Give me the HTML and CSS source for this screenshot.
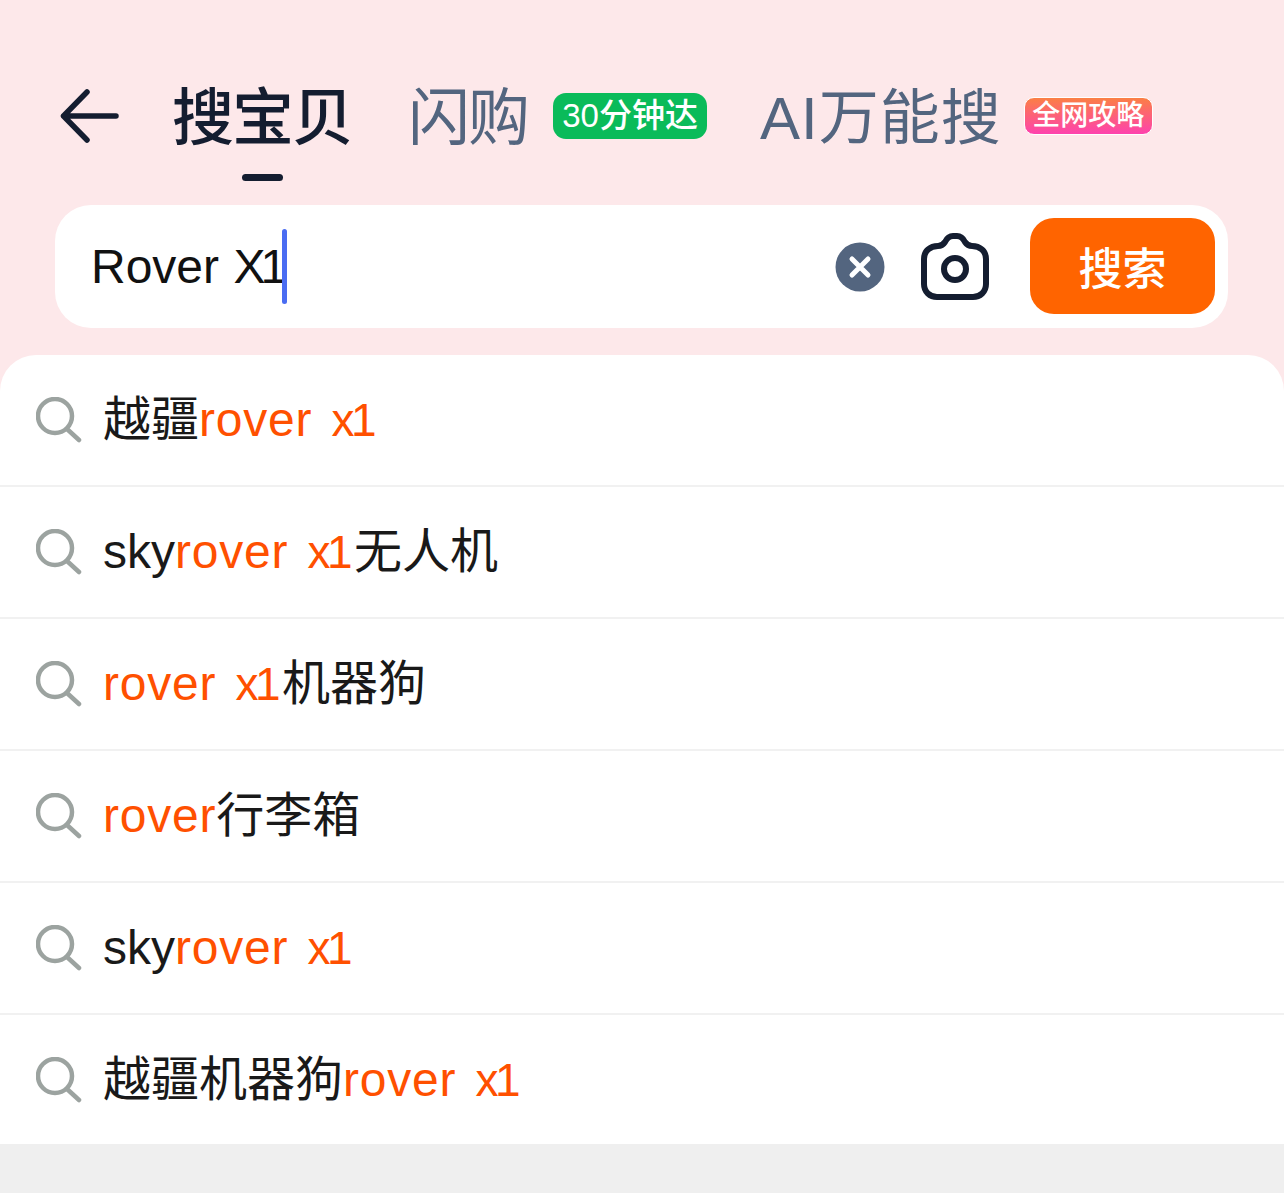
FILE: index.html
```html
<!DOCTYPE html>
<html lang="zh-CN">
<head>
    <meta charset="UTF-8">
    <title>搜索</title>
    <link rel="stylesheet" href="styles.css">
</head>
<body>
    <header class="tabs">
        <svg class="back-icon" width="60" height="56" viewBox="0 0 60 56">
            <path d="M56 28H3.500M27 4 3.500 28 27 52" fill="none" stroke="#141d30" stroke-width="5.5" stroke-linecap="round" stroke-linejoin="round"/>
        </svg>
        <div class="tab tab-active">搜宝贝</div>
        <div class="tab tab-flash">闪购</div>
        <span class="badge badge-green">30分钟达</span>
        <div class="tab tab-ai">AI万能搜</div>
        <span class="badge badge-pink">全网攻略</span>
    </header>

    <section class="search-box">
        <div class="search-text">Rover <span class="search-x">X1</span><span class="caret"></span></div>
        <svg class="clear-icon" width="50" height="50" viewBox="0 0 50 50">
            <circle cx="25" cy="25" r="24.5" fill="#53657f"/>
            <path d="M17 17l16 16M33 17 17 33" stroke="#fff" stroke-width="5" stroke-linecap="round"/>
        </svg>
        <svg class="camera-icon" width="68" height="68" viewBox="0 0 68 68">
            <path d="M17 13c3 0 5-1 7-4 2-4 5-6 8-6h4c3 0 6 2 8 6 2 3 4 4 7 4 8 0 14 5 14 13v25c0 8-6 13-13 13H16C9 64 3 59 3 51V26c0-8 6-13 14-13z" fill="none" stroke="#141d30" stroke-width="6" stroke-linejoin="round"/>
            <circle cx="34" cy="36" r="11" fill="none" stroke="#141d30" stroke-width="6"/>
        </svg>
        <button class="search-btn">搜索</button>
    </section>

    <ul class="suggest-list">
        <li class="suggest-item">
            <svg class="search-icon" width="46" height="46" viewBox="0 0 46 46"><circle cx="19" cy="19" r="17" fill="none" stroke="#9ca3a0" stroke-width="4.5"/><path d="M31 32l12 11" stroke="#9ca3a0" stroke-width="4.5" stroke-linecap="round"/></svg>
            <span class="suggest-text">越疆<em>rover <span class="x1">x1</span></em></span>
        </li>
        <li class="suggest-item">
            <svg class="search-icon" width="46" height="46" viewBox="0 0 46 46"><circle cx="19" cy="19" r="17" fill="none" stroke="#9ca3a0" stroke-width="4.5"/><path d="M31 32l12 11" stroke="#9ca3a0" stroke-width="4.5" stroke-linecap="round"/></svg>
            <span class="suggest-text">sky<em>rover <span class="x1">x1</span></em>无人机</span>
        </li>
        <li class="suggest-item">
            <svg class="search-icon" width="46" height="46" viewBox="0 0 46 46"><circle cx="19" cy="19" r="17" fill="none" stroke="#9ca3a0" stroke-width="4.5"/><path d="M31 32l12 11" stroke="#9ca3a0" stroke-width="4.5" stroke-linecap="round"/></svg>
            <span class="suggest-text"><em>rover <span class="x1">x1</span></em>机器狗</span>
        </li>
        <li class="suggest-item">
            <svg class="search-icon" width="46" height="46" viewBox="0 0 46 46"><circle cx="19" cy="19" r="17" fill="none" stroke="#9ca3a0" stroke-width="4.5"/><path d="M31 32l12 11" stroke="#9ca3a0" stroke-width="4.5" stroke-linecap="round"/></svg>
            <span class="suggest-text"><em>rover</em>行李箱</span>
        </li>
        <li class="suggest-item">
            <svg class="search-icon" width="46" height="46" viewBox="0 0 46 46"><circle cx="19" cy="19" r="17" fill="none" stroke="#9ca3a0" stroke-width="4.5"/><path d="M31 32l12 11" stroke="#9ca3a0" stroke-width="4.5" stroke-linecap="round"/></svg>
            <span class="suggest-text">sky<em>rover <span class="x1">x1</span></em></span>
        </li>
        <li class="suggest-item">
            <svg class="search-icon" width="46" height="46" viewBox="0 0 46 46"><circle cx="19" cy="19" r="17" fill="none" stroke="#9ca3a0" stroke-width="4.5"/><path d="M31 32l12 11" stroke="#9ca3a0" stroke-width="4.5" stroke-linecap="round"/></svg>
            <span class="suggest-text">越疆机器狗<em>rover <span class="x1">x1</span></em></span>
        </li>
    </ul>
</body>
</html>
```

FILE: styles.css
```css
* {
    box-sizing: border-box;
}

html, body {
    height: 100%;
}

body {
    margin: 0;
    height: 1193px;
    overflow: hidden;
    background: #fde8ea;
    font-family: "Liberation Sans", "Noto Sans CJK SC", sans-serif;
}

/* TABS */
.tabs {
    display: flex;
    align-items: center;
    height: 205px;
    padding: 30px 0 3px 60px;
}

.back-icon {
    flex: none;
    margin-right: 52px;
}

.tab {
    position: relative;
    padding-top: 6px;
    font-size: 60px;
    line-height: 70px;
    color: #53657f;
    white-space: nowrap;
}

.tab-active {
    color: #141d30;
    font-size: 62px;
    font-weight: 500;
    letter-spacing: -2px;
    margin-right: 56px;
}

.tab-active::after {
    content: "";
    position: absolute;
    left: 70px;
    bottom: -27px;
    width: 41px;
    height: 7px;
    border-radius: 4px;
    background: #141d30;
}

.tab-flash {
    font-size: 62px;
    letter-spacing: -2px;
    margin-right: 25px;
}

.tab-ai {
    margin-right: 22px;
    letter-spacing: 1px;
}

.badge {
    flex: none;
    color: #fff;
    white-space: nowrap;
    text-align: center;
}

.badge-green {
    width: 154px;
    height: 46px;
    margin-right: 53px;
    border-radius: 13px;
    background: #0abb5a;
    font-size: 33px;
    font-weight: 500;
    line-height: 46px;
}

.badge-pink {
    width: 129px;
    height: 38px;
    border: 1.5px solid #fff;
    border-radius: 10px;
    background: linear-gradient(#fb7f45, #fe42ae);
    font-size: 28px;
    font-weight: 500;
    line-height: 35px;
}

/* SEARCH BOX */
.search-box {
    display: flex;
    align-items: center;
    width: 1173px;
    height: 123px;
    margin-left: 55px;
    padding: 0 13px 0 36px;
    border-radius: 36px;
    background: #fff;
}

.search-text {
    flex: 1;
    display: flex;
    align-items: center;
    font-size: 48px;
    color: #111;
    white-space: pre;
}

.search-x {
    margin-left: 1px;
    letter-spacing: -5px;
}

.caret {
    width: 5px;
    height: 75px;
    border-radius: 3px;
    background: #4a6cf2;
}

.clear-icon {
    flex: none;
    margin-right: 36px;
}

.camera-icon {
    flex: none;
    margin-right: 41px;
}

.search-btn {
    width: 185px;
    height: 96px;
    margin-bottom: 2px;
    border: none;
    border-radius: 24px;
    background: #ff6400;
    color: #fff;
    font-family: inherit;
    font-size: 44px;
    font-weight: 500;
}

/* SUGGESTIONS */
.suggest-list {
    margin: 27px 0 0;
    padding: 0;
    list-style: none;
    background: #fff;
    border-radius: 36px 36px 0 0;
    overflow: hidden;
}

.suggest-item {
    display: flex;
    align-items: center;
    height: 132px;
    padding-left: 36px;
    border-bottom: 2px solid #f1f1f1;
    font-size: 48px;
    color: #191919;
    white-space: nowrap;
}

.suggest-item:last-child {
    height: 129px;
    border-bottom: none;
}

.suggest-text {
    line-height: 60px;
}

.suggest-item em {
    font-style: normal;
    color: #ff5000;
    letter-spacing: 0.8px;
    word-spacing: 5px;
}

.suggest-item .x1 {
    margin-right: 5px;
    font-size: 46px;
    letter-spacing: -3.5px;
}

.search-icon {
    flex: none;
    margin-right: 21px;
}

body::after {
    content: "";
    display: block;
    height: 60px;
    background: #efefef;
}
```
